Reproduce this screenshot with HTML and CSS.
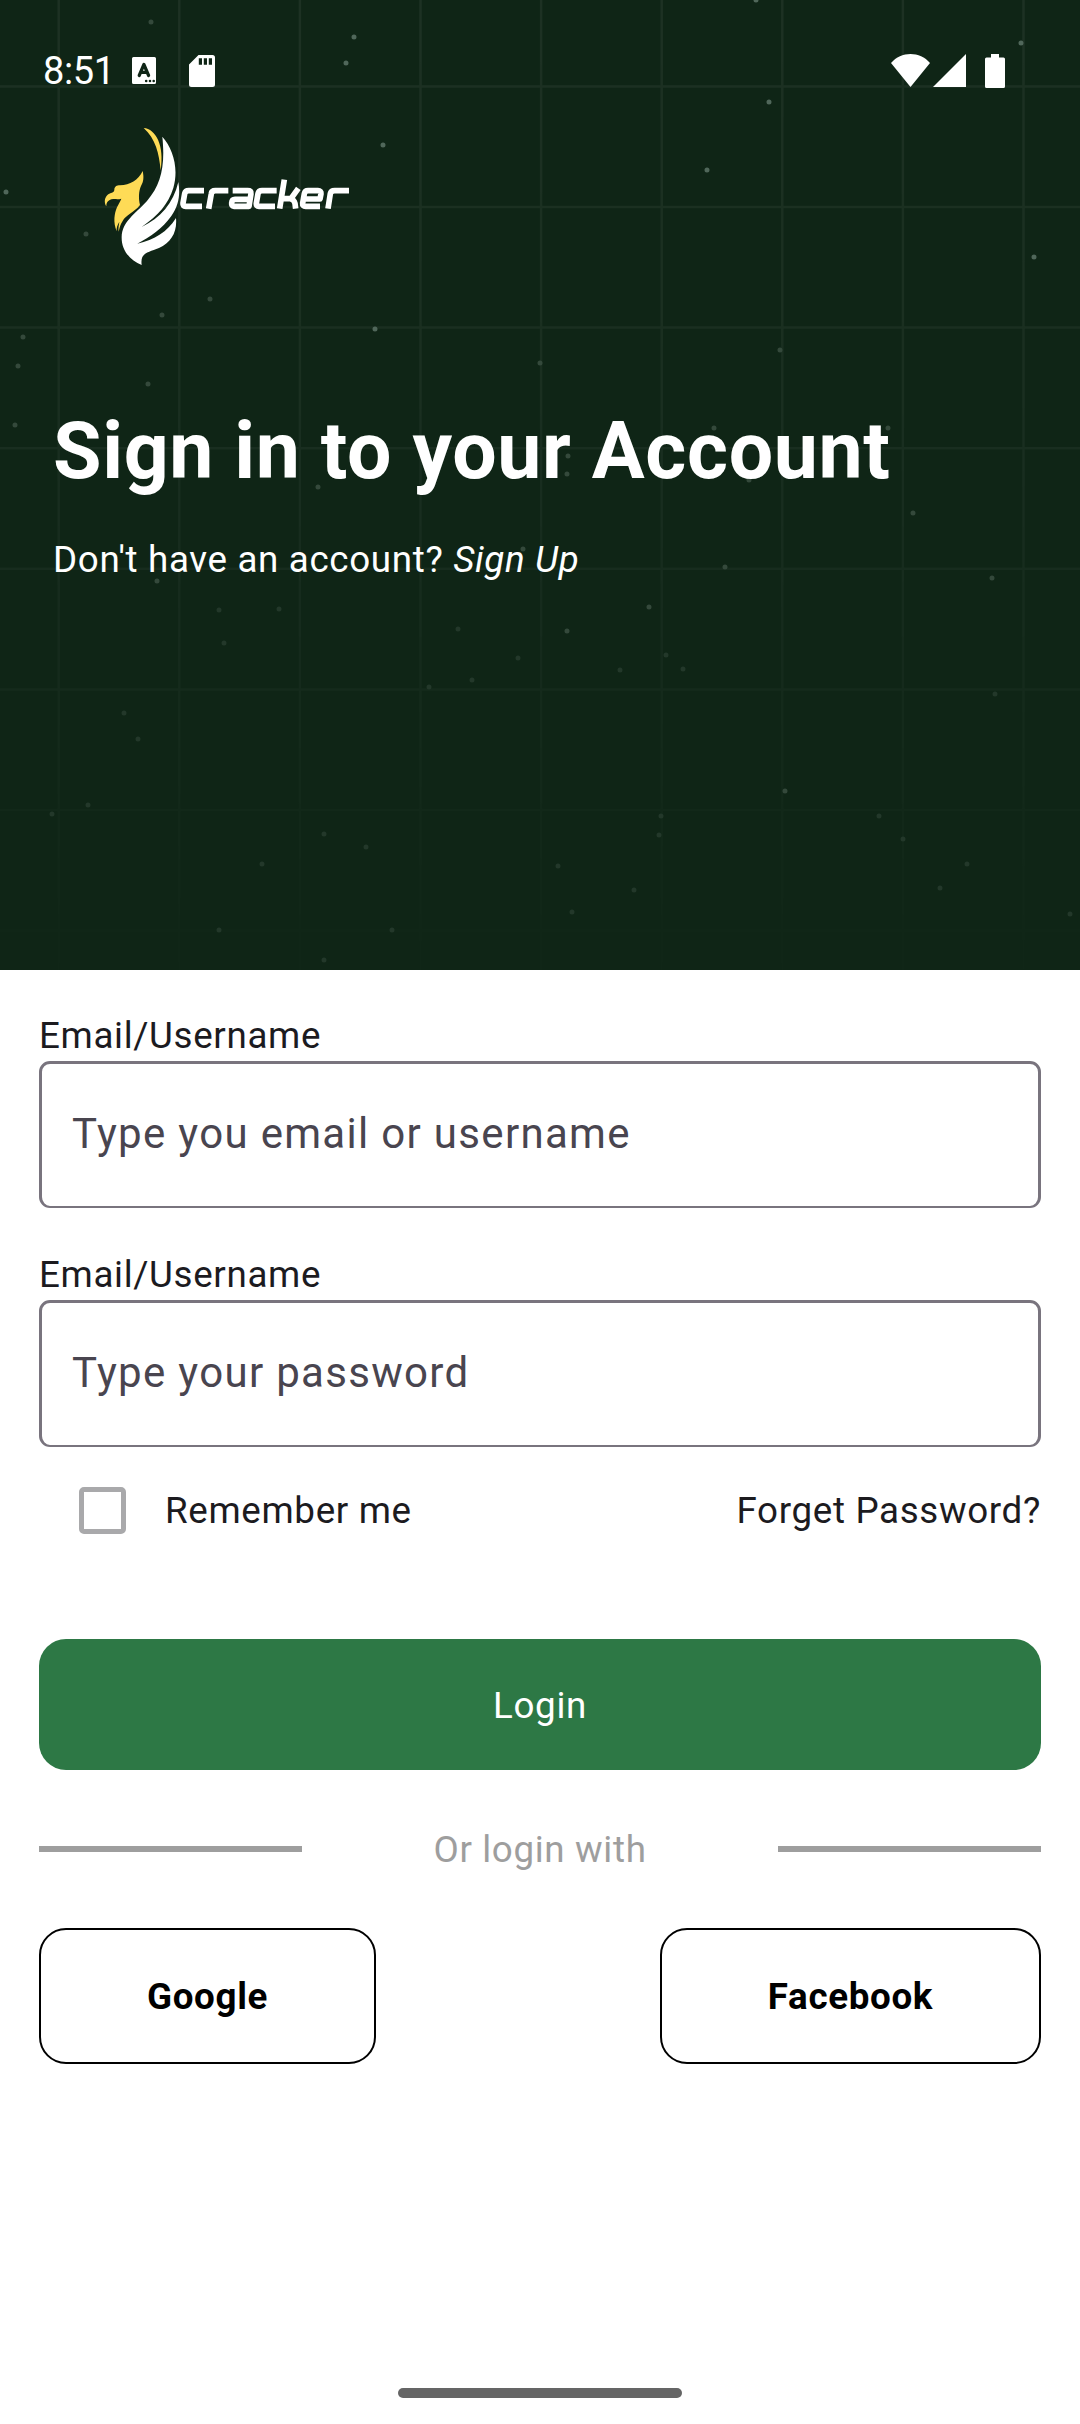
FILE: index.html
```html
<!DOCTYPE html>
<html lang="en">
<head>
<meta charset="utf-8">
<title>Sign in</title>
<link rel="stylesheet" href="styles.css">
</head>
<body>
<header class="hero">
  <svg class="backdrop" viewBox="0 0 1080 970" aria-hidden="true">
    <defs>
      <linearGradient id="fade" x1="0" y1="0" x2="0" y2="1">
        <stop offset="0" stop-color="#fff"/>
        <stop offset=".4" stop-color="#fff" stop-opacity=".8"/>
        <stop offset="1" stop-color="#fff" stop-opacity=".1"/>
      </linearGradient>
      <mask id="fadeMask"><rect width="1080" height="970" fill="url(#fade)"/></mask>
    </defs>
    <g mask="url(#fadeMask)">
      <path class="grid" d="M58.7 0V970M179.3 0V970M299.9 0V970M420.5 0V970M541.1 0V970M661.7 0V970M782.3 0V970M902.9 0V970M1023.5 0V970M0 86.4H1080M0 207H1080M0 327.6H1080M0 448.2H1080M0 568.8H1080M0 689.4H1080M0 810H1080M0 930.6H1080"/>
    </g>
    <path class="dots" d="M756 0h0M354 37h0M346 63h0M1021 43h0M769 102h0M383 145h0M707 170h0M6 192h0M1034 257h0M375 329h0"/>
    <path class="dots dim" d="M151 22h0M86 234h0M210 299h0M162 315h0M23 337h0M18 366h0M148 384h0M540 363h0M780 350h0M15 425h0M714 428h0M888 428h0M567 474h0M568 456h0M749 480h0M318 487h0M913 513h0M523 549h0M725 567h0M992 578h0M157 581h0M649 607h0M567 631h0M785 791h0"/>
    <path class="dots faint" d="M219 610h0M279 609h0M224 643h0M458 629h0M518 658h0M472 680h0M429 687h0M620 670h0M666 655h0M683 669h0M995 694h0M124 713h0M138 739h0M52 814h0M88 805h0M324 834h0M366 847h0M262 864h0M661 816h0M659 835h0M879 816h0M903 839h0M558 866h0M634 890h0M967 864h0M940 888h0M572 912h0M392 930h0M219 930h0M1070 914h0M324 960h0"/>
  </svg>
  <div class="status">
    <span class="clock">8:51</span>
    <svg class="ic-lang" viewBox="0 0 24 27"><path fill="#fff" d="M1.5 0h21A1.5 1.5 0 0 1 24 1.500v24a1.500 1.500 0 0 1-1.500 1.500h-21A1.500 1.500 0 0 1 0 25.500v-24A1.500 1.500 0 0 1 1.500 0z"/><path d="M7.200 18.500 11.900 7.500 16.600 18.500M9 15.300h6" fill="none" stroke="#0f2516" stroke-width="3.200" stroke-linecap="round" stroke-linejoin="round"/><path d="M14.200 24h0M18 24h0M21.700 24h0" stroke="#0f2516" stroke-width="2.600" stroke-linecap="round"/></svg>
    <svg class="ic-sd" viewBox="0 0 26 32"><path fill="#fff" d="M9.500 0H23.500A2.500 2.500 0 0 1 26 2.500v27A2.500 2.500 0 0 1 23.500 32h-21A2.500 2.500 0 0 1 0 29.500V9.500z"/><path fill="#0f2516" d="M9.800 3.200h3.200v6.500H9.800zM14.800 3.200H18v6.500h-3.200zM19.800 3.200H23v6.500h-3.200z"/></svg>
    <svg class="ic-wifi" viewBox="0 0 39 33"><path fill="#fff" d="M0 9C10-3 29-3 39 9L19.500 33z"/></svg>
    <svg class="ic-cell" viewBox="0 0 33 33"><path fill="#fff" d="M33 0V33H0z"/></svg>
    <svg class="ic-bat" viewBox="0 0 20 34"><path fill="#fff" d="M6 0h8v3.500h4.500A1.500 1.500 0 0 1 20 5v27.500a1.500 1.500 0 0 1-1.500 1.500h-17A1.500 1.500 0 0 1 0 32.500V5a1.500 1.500 0 0 1 1.500-1.500H6z"/></svg>
  </div>
  <svg class="logo" viewBox="0 0 270 160" role="img" aria-label="cracker">
    <g transform="scale(.33333)">
      <path fill="#fedb56" d="M161 39C197 42 224 90 212 166C207 114 197 72 161 39z"/>
      <path fill="#fedb56" d="M158 168C162 186 161 200 153 213C146 228 145 250 150 270C132 293 108 299 98 318C91 328 89 338 86 350C84 338 87 329 88 320C82 330 79 339 80 349C69 321 73 296 81 277C86 266 91 259 94 251C80 255 66 248 54 259C50 263 49 268 49 274C42 262 43 249 53 239C62 232 72 235 73 224C73 215 80 211 90 211C120 209 145 196 158 168z"/>
      <path fill="#fff" d="M217 65C249 101 267 160 250 219C235 268 205 300 155 336C211 309 250 265 265 201C271 237 267 271 244 303C217 341 181 366 142 386C194 375 232 350 258 309C262 352 243 382 207 399C174 413 150 412 155 450C121 436 94 407 95 366C96 319 137 296 171 258C214 208 226 151 217 65z"/>
      <g class="wordmark">
        <path d="M342 227H296Q286 227 284 236L279 265Q278 274 287 274H336"/>
        <path d="M356 281L364 236Q365 227 376 227H415"/>
        <path d="M428 227H473Q485 227 483 236L477 274H432Q424 274 425 264Q426 253 435 253H479"/>
        <path d="M560 227H516Q506 227 504 236L499 265Q498 274 507 274H555"/>
        <path d="M583 194L569 281M575 251H603L625 220M601 251Q612 253 615 265L617 281"/>
        <path d="M644 252H690L693 236Q694 227 684 227H654Q645 227 643 236L638 265Q637 274 647 274H690"/>
        <path d="M714 281L721 236Q723 227 734 227H777"/>
      </g>
    </g>
  </svg>
  <h1 class="title">Sign in to your Account</h1>
  <p class="sub">Don't have an account? <a class="signup">Sign Up</a></p>
</header>
<main class="form">
  <label class="label">Email/Username</label>
  <div class="field">Type you email or username</div>
  <label class="label">Email/Username</label>
  <div class="field">Type your password</div>
  <div class="options">
    <span class="check"></span>
    <span class="caption">Remember me</span>
    <a class="caption forgot">Forget Password?</a>
  </div>
  <button class="login">Login</button>
  <div class="divider"><i class="rule"></i><span class="caption">Or login with</span><i class="rule"></i></div>
  <div class="social">
    <button class="alt google">Google</button>
    <button class="alt facebook">Facebook</button>
  </div>
</main>
<footer class="nav"><i class="pill"></i></footer>
</body>
</html>
```
FILE: styles.css
```css
* { box-sizing: border-box; }
body {
  margin: 0;
  height: 2424px;
  display: flex;
  flex-direction: column;
  background: #fff;
  color: #1c1b1f;
  font: 400 36.75px/52px Roboto, sans-serif;
  letter-spacing: .656px;
}
.hero {
  position: relative;
  height: 970px;
  flex: none;
  background: #0f2516;
  color: #fff;
}
.backdrop { position: absolute; inset: 0; width: 1080px; height: 970px; }
.grid { stroke: #fff; stroke-opacity: .06; stroke-width: 2.5; fill: none; }
.dots { stroke: #50675a; stroke-width: 5; stroke-linecap: round; }
.dots.dim { stroke: #34493b; }
.dots.faint { stroke: #23382a; }
.status {
  position: relative;
  height: 115px;
  padding: 54px 75px 0 43px;
  display: flex;
  align-items: flex-start;
}
.clock { width: 89px; font-size: 38px; line-height: 34px; letter-spacing: -.4px; }
.ic-lang { width: 24px; height: 27px; margin: 3px 33px 0 0; }
.ic-sd { width: 26px; height: 32px; margin-top: 1px; }
.ic-wifi { width: 39px; height: 33px; margin: 0 3px 0 auto; }
.ic-cell { width: 33px; height: 33px; margin-right: 19px; }
.ic-bat { width: 20px; height: 34px; }
.logo { position: relative; display: block; width: 270px; height: 160px; margin-left: 90px; }
.wordmark { fill: none; stroke: #fff; stroke-width: 17; stroke-linejoin: round; }
.title {
  position: relative;
  margin: 126px 0 0 53px;
  font-size: 78.75px;
  line-height: 100px;
  font-weight: 700;
}
.sub { position: relative; margin: 33px 0 0 53px; }
.signup { font-style: italic; }
.form { padding: 39px 39px 0; display: flex; flex-direction: column; }
.label { height: 52px; padding-top: 1px; }
.field {
  height: 147px;
  margin-bottom: 40px;
  padding-left: 30px;
  border: 3px solid #79747e;
  border-bottom-width: 2px;
  border-radius: 11px;
  font-size: 42px;
  line-height: 140px;
  letter-spacing: 1.3125px;
  color: #49454f;
}
.options { display: flex; align-items: center; height: 126px; margin-top: -40px; padding-left: 40px; }
.caption { padding-top: 2px; }
.check { width: 47px; height: 47px; margin-right: 39px; border: 5px solid #a9a9ab; border-radius: 5px; }
.forgot { margin-left: auto; }
.login, .alt { font: inherit; letter-spacing: inherit; padding: 2px 0 0; }
.login { height: 131px; margin-top: 66px; border: 0; border-radius: 27px; background: #2d7845; color: #fff; }
.divider { display: flex; justify-content: space-between; align-items: center; height: 52px; margin-top: 53px; color: #9e9e9e; }
.rule { width: 263px; height: 6px; background: #9e9e9e; }
.social { display: flex; justify-content: space-between; margin-top: 53px; }
.alt { height: 136px; border: 2px solid #000; border-width: 2px 2.6px; border-radius: 27px; background: none; color: #000; font-weight: 700; }
.google { width: 337px; }
.facebook { width: 381px; }
.nav { margin-top: auto; height: 36px; display: flex; justify-content: center; }
.pill { width: 284px; height: 10px; border-radius: 5px; background: #656565; }
```
